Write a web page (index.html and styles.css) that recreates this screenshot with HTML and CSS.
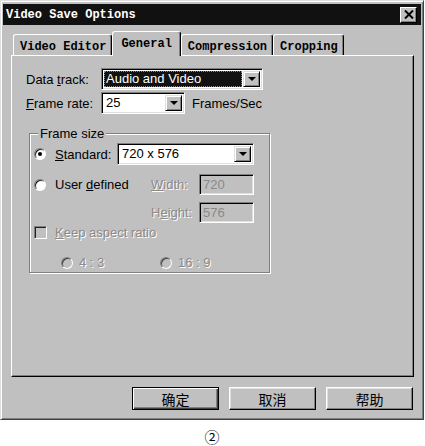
FILE: index.html
```html
<!DOCTYPE html>
<html>
<head>
<meta charset="utf-8">
<link rel="stylesheet" href="styles.css">
</head>
<body>
<div class="dialog">
  <div class="titlebar">
    <span class="title">Video Save Options</span>
    <span class="close"><svg width="10" height="9" viewBox="0 0 10 9"><path d="M1 0.5 L9 8.5 M9 0.5 L1 8.5" stroke="#000" stroke-width="2"/></svg></span>
  </div>
  <div class="tabs">
    <div class="tab">Video Editor</div>
    <div class="tab active">General</div>
    <div class="tab">Compression</div>
    <div class="tab">Cropping</div>
  </div>
  <div class="panel">
    <div class="row">
      <span class="lbl">Data <u>t</u>rack:</span>
      <div class="combo w-track"><span class="val sel">Audio and Video</span><span class="drop"><i class="tri"></i></span></div>
    </div>
    <div class="row r2">
      <span class="lbl"><u>F</u>rame rate:</span>
      <div class="combo w-rate"><span class="val">25</span><span class="drop"><i class="tri"></i></span></div>
      <span class="unit">Frames/Sec</span>
    </div>
    <div class="group">
      <span class="legend">Frame size</span>
      <div class="row">
        <span class="radio checked"></span>
        <span class="rlbl w-std"><u>S</u>tandard:</span>
        <div class="combo w-size"><span class="val">720 x 576</span><span class="drop"><i class="tri"></i></span></div>
      </div>
      <div class="row g2">
        <span class="radio"></span>
        <span class="rlbl w-user">User <u>d</u>efined</span>
        <span class="dlbl dis"><u>W</u>idth:</span>
        <span class="field">720</span>
      </div>
      <div class="row g3">
        <span class="dlbl dis hgt">H<u>e</u>ight:</span>
        <span class="field">576</span>
      </div>
      <div class="row g4">
        <span class="check"></span>
        <span class="clbl dis"><u>K</u>eep aspect ratio</span>
      </div>
      <div class="row g5">
        <span class="opt"><span class="radio off"></span><span class="dis otxt">4 : 3</span></span>
        <span class="opt"><span class="radio off"></span><span class="dis otxt">16 : 9</span></span>
      </div>
    </div>
  </div>
  <div class="btns">
    <div class="btn default">确定</div>
    <div class="btn">取消</div>
    <div class="btn">帮助</div>
  </div>
</div>
<div class="caption">②</div>
</body>
</html>
```

FILE: styles.css
```css
body {
  margin: 0;
  background: #fff;
  font-family: "Liberation Sans", Arial, sans-serif;
  font-size: 13px;
  color: #000;
}
.dialog {
  width: 424px;
  height: 420px;
  box-sizing: border-box;
  background: #c0c0c0;
  border: 1px solid;
  border-color: #dfdfdf #404040 #404040 #dfdfdf;
  box-shadow: inset 1px 1px #fff, inset -1px -1px #808080;
  padding: 2px;
  display: flex;
  flex-direction: column;
}
.titlebar {
  margin-top: 1px;
  height: 21px;
  background: #111;
  display: flex;
  align-items: center;
  justify-content: space-between;
  padding: 0 4px 0 3px;
}
.title {
  color: #fff;
  font: bold 12px "Liberation Mono", monospace;
}
.close {
  width: 17px;
  height: 16px;
  box-sizing: border-box;
  background: #c0c0c0;
  border: 1px solid;
  border-color: #fff #000 #000 #fff;
  box-shadow: inset -1px -1px #808080;
  display: flex;
  align-items: center;
  justify-content: center;
}
.tabs {
  margin-top: 6px;
  display: flex;
  align-items: flex-end;
  padding-left: 10px;
  height: 24px;
}
.tab {
  height: 21px;
  box-sizing: border-box;
  border-top: 1px solid #fff;
  border-left: 1px solid #fff;
  border-right: 1px solid #000;
  box-shadow: inset -1px 0 #808080;
  border-radius: 3px 3px 0 0;
  padding: 3px 5px 0 6px;
  font: bold 12px "Liberation Mono", monospace;
  display: flex;
  align-items: center;
  background: #c0c0c0;
}
.tab.active {
  height: 25px;
  margin-bottom: -1px;
  padding: 0 8px;
  position: relative;
  z-index: 1;
}
.panel {
  margin: 0 7px 0 8px;
  height: 322px;
  box-sizing: border-box;
  border: 1px solid;
  border-color: #fff #000 #000 #fff;
  box-shadow: inset -1px -1px #808080;
  padding: 12px 0 0 14px;
}
.row {
  display: flex;
  align-items: center;
}
.r2 { margin-top: 2px; }
.lbl { width: 75px; }
.combo {
  height: 22px;
  box-sizing: border-box;
  border: 1px solid;
  border-color: #808080 #fff #fff #808080;
  box-shadow: inset 1px 1px #000, inset -1px -1px #dfdfdf;
  background: #fff;
  padding: 2px;
  display: flex;
  align-items: center;
}
.w-track { width: 162px; }
.w-rate { width: 84px; }
.w-size { width: 137px; }
.val {
  flex: 1;
  height: 16px;
  line-height: 16px;
  padding-left: 2px;
}
.val.sel {
  background: #111;
  color: #fff;
  outline: 1px dotted #888;
  outline-offset: -1px;
  margin-right: 1px;
}
.drop {
  width: 17px;
  height: 16px;
  box-sizing: border-box;
  background: #c0c0c0;
  border: 1px solid;
  border-color: #dfdfdf #000 #000 #dfdfdf;
  box-shadow: inset 1px 1px #fff, inset -1px -1px #808080;
  display: flex;
  align-items: center;
  justify-content: center;
}
.tri {
  width: 0;
  height: 0;
  border-top: 4px solid #000;
  border-left: 4px solid transparent;
  border-right: 4px solid transparent;
}
.unit { margin-left: 7px; }
.group {
  position: relative;
  margin: 19px 0 0 3px;
  width: 241px;
  height: 140px;
  box-sizing: border-box;
  border: 1px solid #808080;
  box-shadow: 1px 1px #fff, inset 1px 1px #fff;
  padding: 9px 0 0 4px;
}
.legend {
  position: absolute;
  top: -8px;
  left: 8px;
  background: #c0c0c0;
  padding: 0 2px;
  line-height: 15px;
}
.radio {
  width: 12px;
  height: 12px;
  box-sizing: border-box;
  border-radius: 50%;
  border: 1px solid;
  border-color: #808080 #fff #fff #808080;
  box-shadow: inset 1px 1px #202020;
  background: #fff;
  display: flex;
  align-items: center;
  justify-content: center;
  flex: none;
}
.radio.checked::after {
  content: "";
  width: 4px;
  height: 4px;
  border-radius: 50%;
  background: #000;
}
.radio.off {
  background: #c0c0c0;
  box-shadow: inset 1px 1px #404040;
}
.rlbl { margin-left: 9px; }
.w-std { width: 62px; }
.w-user { width: 96px; }
.g2 { margin-top: 9px; }
.g3 { margin-top: 7px; }
.g4 { margin-top: 2px; }
.g5 { margin-top: 15px; }
.dis {
  color: #8a8a8a;
  text-shadow: 1px 1px #fff;
}
.dlbl { width: 48px; }
.hgt { margin-left: 117px; }
.field {
  width: 55px;
  height: 21px;
  box-sizing: border-box;
  border: 1px solid;
  border-color: #808080 #fff #fff #808080;
  box-shadow: inset 1px 1px #000, inset -1px -1px #dfdfdf;
  background: #c0c0c0;
  color: #8a8a8a;
  padding: 2px 0 0 3px;
}
.check {
  width: 13px;
  height: 13px;
  box-sizing: border-box;
  border: 1px solid;
  border-color: #808080 #fff #fff #808080;
  box-shadow: inset 1px 1px #202020;
  background: #c0c0c0;
  flex: none;
}
.clbl { margin-left: 8px; }
.opt {
  display: flex;
  align-items: center;
}
.opt:first-child {
  margin-left: 27px;
  width: 99px;
}
.otxt { margin-left: 6px; }
.btns {
  display: flex;
  justify-content: flex-end;
  gap: 10px;
  margin: 10px 8px 0 0;
}
.btn {
  width: 87px;
  height: 23px;
  box-sizing: border-box;
  border: 1px solid;
  border-color: #fff #000 #000 #fff;
  box-shadow: inset -1px -1px #808080, inset 1px 1px #dfdfdf;
  font: 14px "Noto Sans CJK SC", sans-serif;
  display: flex;
  align-items: center;
  justify-content: center;
}
.btn.default {
  border-color: #000;
  box-shadow: inset 1px 1px #fff, inset -1px -1px #404040, inset -2px -2px #808080;
}
.caption {
  width: 424px;
  margin-top: 8px;
  text-align: center;
  font: 15px/18px "Noto Sans CJK SC", sans-serif;
}
```
